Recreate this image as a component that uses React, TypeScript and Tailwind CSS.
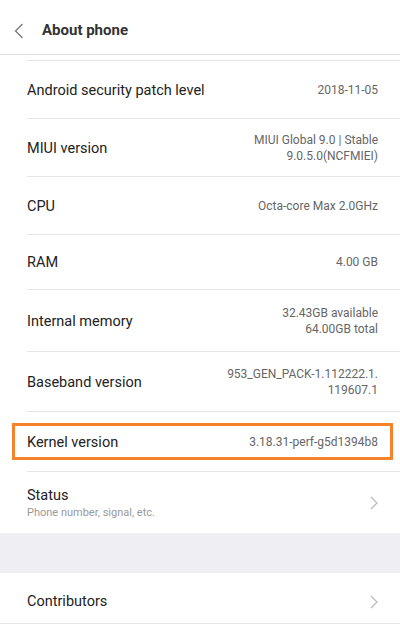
import React from 'react';

type Row = {
  label: string;
  value: string[];
  h: string;
  highlight?: boolean;
};

const rows: Row[] = [
  { label: 'Android security patch level', value: ['2018-11-05'], h: 'h-[58px]' },
  { label: 'MIUI version', value: ['MIUI Global 9.0 | Stable', '9.0.5.0(NCFMIEI)'], h: 'h-[58px]' },
  { label: 'CPU', value: ['Octa-core Max 2.0GHz'], h: 'h-[58px]' },
  { label: 'RAM', value: ['4.00 GB'], h: 'h-[55px]' },
  { label: 'Internal memory', value: ['32.43GB available', '64.00GB total'], h: 'h-[62px]' },
  { label: 'Baseband version', value: ['953_GEN_PACK-1.112222.1.', '119607.1'], h: 'h-[60px]' },
  { label: 'Kernel version', value: ['3.18.31-perf-g5d1394b8'], h: 'h-[60px]', highlight: true },
];

const Chevron = () => (
  <svg width="8" height="14" viewBox="0 0 8 14" fill="none" className="shrink-0">
    <path d="M1 1l6 6-6 6" stroke="#b8b8b8" strokeWidth="1.2" />
  </svg>
);

export default function App() {
  return (
    <div className="w-[400px] h-[631px] overflow-hidden bg-white font-['Roboto',sans-serif] text-[#222]">
      {/* header */}
      <div className="h-[55px] flex items-center border-b border-[#e2e2e2]">
        <svg width="10" height="16" viewBox="0 0 10 16" fill="none" className="ml-[14px] mt-[7px]">
          <path d="M8.5 1L1.5 8l7 7" stroke="#777" strokeWidth="1.3" />
        </svg>
        <span className="ml-[18px] mt-[7px] text-[15px] font-bold text-[#333]">About phone</span>
      </div>

      <div className="h-[6px] border-b border-[#e6e6e6] ml-[27px]" />

      {rows.map((r) => (
        <div key={r.label} className={`relative ${r.h} ml-[27px] pr-[22px] flex items-center justify-between border-b border-[#e6e6e6]`}>
          <span className="text-[14.5px] leading-[20px] mt-[2px]">{r.label}</span>
          <div className="text-right text-[12px] leading-[16px] text-[#666]">
            {r.value.map((v) => (
              <div key={v}>{v}</div>
            ))}
          </div>
          {r.highlight && (
            <div className="absolute left-[-15px] right-[7px] top-[11px] h-[37px] border-[3px] border-[#f5832b]" />
          )}
        </div>
      ))}

      <div className="h-[61px] ml-[27px] pr-[22px] flex items-center justify-between">
        <div className="flex flex-col">
          <span className="text-[14.5px] leading-[18px] mt-[2px]">Status</span>
          <span className="text-[11px] leading-[16px] text-[#999]">Phone number, signal, etc.</span>
        </div>
        <Chevron />
      </div>

      <div className="h-[40px] bg-[#efeff3]" />

      <div className="h-[51px] pl-[27px] pr-[22px] pt-[8px] flex items-center justify-between border-b border-[#e6e6e6]">
        <span className="text-[14.5px]">Contributors</span>
        <Chevron />
      </div>
    </div>
  );
}
